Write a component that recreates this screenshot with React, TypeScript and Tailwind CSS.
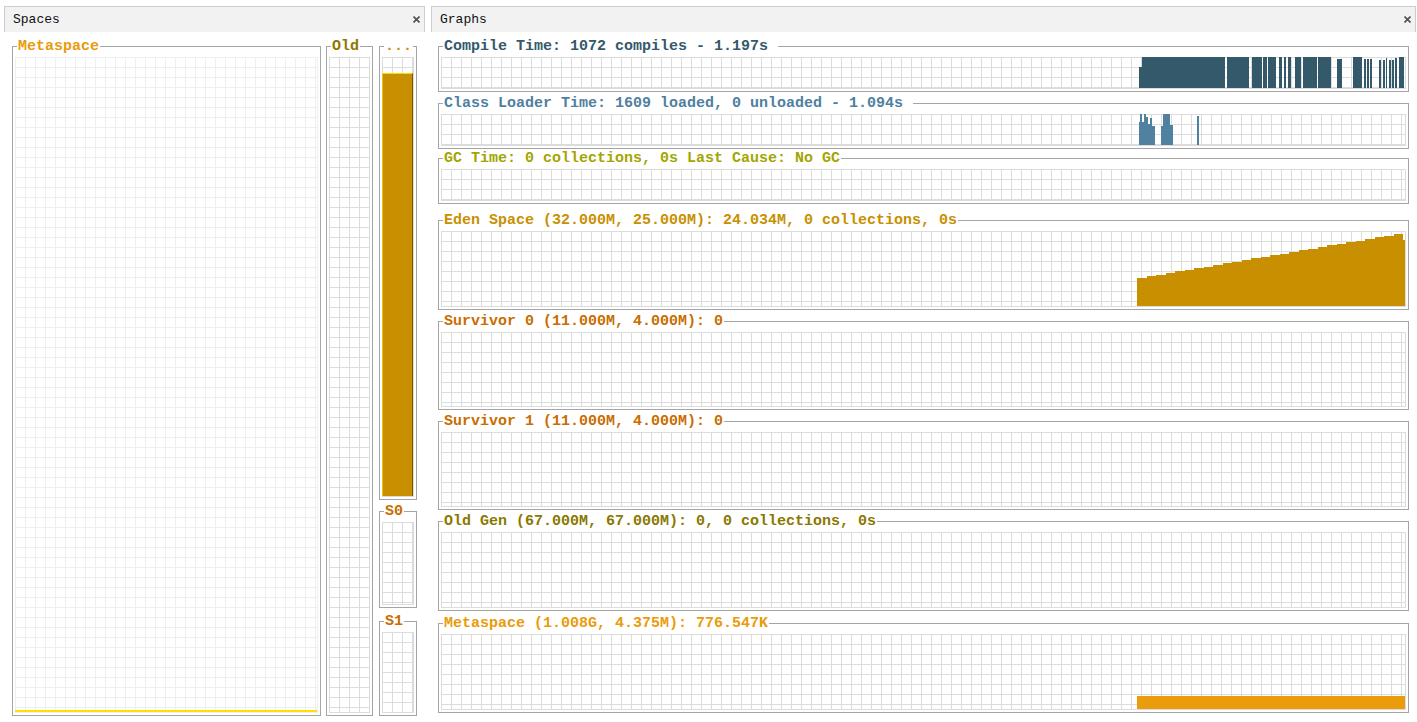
import type { ReactNode } from 'react';

const mono = "font-['Liberation_Mono','DejaVu_Sans_Mono',monospace]";

function CloseIcon() {
  return (
    <svg width="7" height="7" viewBox="0 0 7 7" className="shrink-0">
      <path d="M0.5 0.5 L6.5 6.5 M6.5 0.5 L0.5 6.5" stroke="#505050" strokeWidth="1.6" />
    </svg>
  );
}

function Tab({ title }: { title: string }) {
  return (
    <div className="flex h-[26px] shrink-0 items-center justify-between border-x border-t border-[#cdcdcd] bg-[#f2f2f2] pl-[8px] pr-[4px]">
      <span className={`${mono} text-[13px] leading-[13px] text-[#111]`}>{title}</span>
      <CloseIcon />
    </div>
  );
}

function Titled({
  title,
  color,
  className = '',
  children,
}: {
  title: string;
  color: string;
  className?: string;
  children: ReactNode;
}) {
  return (
    <fieldset className={`block min-w-0 shrink-0 border border-[#a5a5a5] px-[2px] pb-[2px] pt-[3px] ${className}`}>
      <legend className={`${mono} ml-[2px] whitespace-pre px-[1px] text-[15px] font-bold leading-[15px] ${color}`}>
        {title}
      </legend>
      {children}
    </fieldset>
  );
}

function Grid({ h, light = false, children }: { h: string; light?: boolean; children?: ReactNode }) {
  const lines = light
    ? 'border-[#efefef] bg-[linear-gradient(to_right,#efefef_1px,transparent_1px),linear-gradient(to_bottom,#efefef_1px,transparent_1px)]'
    : 'border-[#dcdcdc] bg-[linear-gradient(to_right,#dcdcdc_1px,transparent_1px),linear-gradient(to_bottom,#dcdcdc_1px,transparent_1px)]';
  return (
    <div className={`relative flex flex-col justify-end overflow-hidden border-b border-r bg-[length:10px_10px] ${h} ${lines}`}>
      {children}
    </div>
  );
}

// [x0, x1, top] inside a 268 px wide box
const compileBars: [number, number, number][] = [
  [2, 5, 11], [5, 88, 0], [90, 112, 0], [115, 125, 0], [126, 130, 0], [131, 139, 0],
  [142, 145, 1], [147, 149, 1], [151, 154, 1], [158, 164, 0], [166, 180, 0], [181, 194, 0],
  [200, 205, 3], [216, 225, 0], [227, 229, 3], [230, 232, 3], [233, 235, 3],
  [242, 244, 4], [246, 248, 4], [249, 250, 2], [252, 254, 4], [255, 257, 4], [258, 260, 2],
  [262, 267, 0],
];

const loaderBars: [number, number, number][] = [
  [2, 3, 9], [3, 5, 0], [5, 7, 9], [7, 9, 0], [9, 11, 4], [11, 13, 11], [13, 15, 5], [15, 18, 13],
  [24, 26, 13], [26, 33, 0], [33, 36, 12], [60, 62, 3],
];

function BarChart({ bars, h, fill }: { bars: [number, number, number][]; h: number; fill: string }) {
  return (
    <svg width="268" height={h} className="absolute bottom-0 right-0" shapeRendering="crispEdges">
      {bars.map(([x0, x1, top], i) => (
        <rect key={i} x={x0} y={top} width={x1 - x0} height={h - top} fill={fill} />
      ))}
    </svg>
  );
}

function EdenChart() {
  const h = 76;
  const steps = 28;
  let d = `M0 ${h}`;
  for (let i = 0; i < steps; i++) {
    const x0 = i * 9.5;
    const x1 = Math.min((i + 1) * 9.5, 266);
    const top = Math.round(h - (28 + (44 * i) / (steps - 1)));
    d += ` L${x0} ${top} L${x1} ${top}`;
  }
  d += ` L266 ${h - 66} L268 ${h - 66} L268 ${h} Z`;
  return (
    <svg width="268" height={h} className="absolute bottom-0 right-0" shapeRendering="crispEdges">
      <path d={d} fill="#c89000" />
    </svg>
  );
}

function MetaChart() {
  return (
    <svg width="268" height="14" className="absolute bottom-0 right-0" shapeRendering="crispEdges">
      <rect x="0" y="1" width="268" height="13" fill="#eb9c0b" />
    </svg>
  );
}

const graphs = [
  { title: 'Compile Time: 1072 compiles - 1.197s ', color: 'text-[#34596b]', cls: '', h: 'h-[32px]', chart: 'compile' },
  { title: 'Class Loader Time: 1609 loaded, 0 unloaded - 1.094s ', color: 'text-[#4f80a0]', cls: 'mt-[4px]', h: 'h-[32px]', chart: 'loader' },
  { title: 'GC Time: 0 collections, 0s Last Cause: No GC', color: 'text-[#a3a600]', cls: 'mt-[2px]', h: 'h-[32px]', chart: '' },
  { title: 'Eden Space (32.000M, 25.000M): 24.034M, 0 collections, 0s', color: 'text-[#c89000]', cls: 'mt-[9px]', h: 'h-[76px]', chart: 'eden' },
  { title: 'Survivor 0 (11.000M, 4.000M): 0', color: 'text-[#c86e00]', cls: 'mt-[4px]', h: 'h-[75px]', chart: '' },
  { title: 'Survivor 1 (11.000M, 4.000M): 0', color: 'text-[#c86e00]', cls: 'mt-[4px]', h: 'h-[75px]', chart: '' },
  { title: 'Old Gen (67.000M, 67.000M): 0, 0 collections, 0s', color: 'text-[#8a7800]', cls: 'mt-[4px]', h: 'h-[76px]', chart: '' },
  { title: 'Metaspace (1.008G, 4.375M): 776.547K', color: 'text-[#e99b0b]', cls: 'mt-[5px]', h: 'h-[76px]', chart: 'meta' },
];

function Chart({ kind }: { kind: string }) {
  if (kind === 'compile') return <BarChart bars={compileBars} h={32} fill="#34596b" />;
  if (kind === 'loader') return <BarChart bars={loaderBars} h={32} fill="#5081a1" />;
  if (kind === 'eden') return <EdenChart />;
  if (kind === 'meta') return <MetaChart />;
  return null;
}

export default function App() {
  return (
    <div className="flex h-[722px] w-[1417px] overflow-hidden bg-white pl-[4px] pt-[6px]">
      {/* Spaces */}
      <div className="flex w-[421px] shrink-0 flex-col">
        <Tab title="Spaces" />
        <div className="flex items-start px-[8px] pt-[7px]">
          <Titled title="Metaspace" color="text-[#e99b0b]" className="w-[309px]">
            <Grid h="h-[656px]" light>
              <div className="h-[2px] bg-[#ffe100]" />
            </Grid>
          </Titled>
          <Titled title="Old" color="text-[#8a7800]" className="ml-[5px] w-[47px]">
            <Grid h="h-[656px]" />
          </Titled>
          <div className="ml-[6px] flex w-[38px] flex-col">
            <Titled title="..." color="text-[#c89000]" className="w-[38px]">
              <Grid h="h-[440px]">
                <div className="h-[423px] border-l border-r border-t border-l-[#f0c000] border-r-[#7a5800] border-t-[#ffd800] bg-[#c89000]" />
              </Grid>
            </Titled>
            <Titled title="S0" color="text-[#c86e00]" className="mt-[4px] w-[38px]">
              <Grid h="h-[83px]" />
            </Titled>
            <Titled title="S1" color="text-[#c86e00]" className="mt-[6px] w-[38px]">
              <Grid h="h-[81px]" />
            </Titled>
          </div>
        </div>
      </div>

      {/* Graphs */}
      <div className="ml-[6px] flex w-[985px] shrink-0 flex-col">
        <Tab title="Graphs" />
        <div className="flex flex-col px-[7px] pt-[7px]">
          {graphs.map(g => (
            <Titled key={g.title} title={g.title} color={g.color} className={`w-[971px] ${g.cls}`}>
              <Grid h={g.h}>
                <Chart kind={g.chart} />
              </Grid>
            </Titled>
          ))}
        </div>
      </div>
    </div>
  );
}
